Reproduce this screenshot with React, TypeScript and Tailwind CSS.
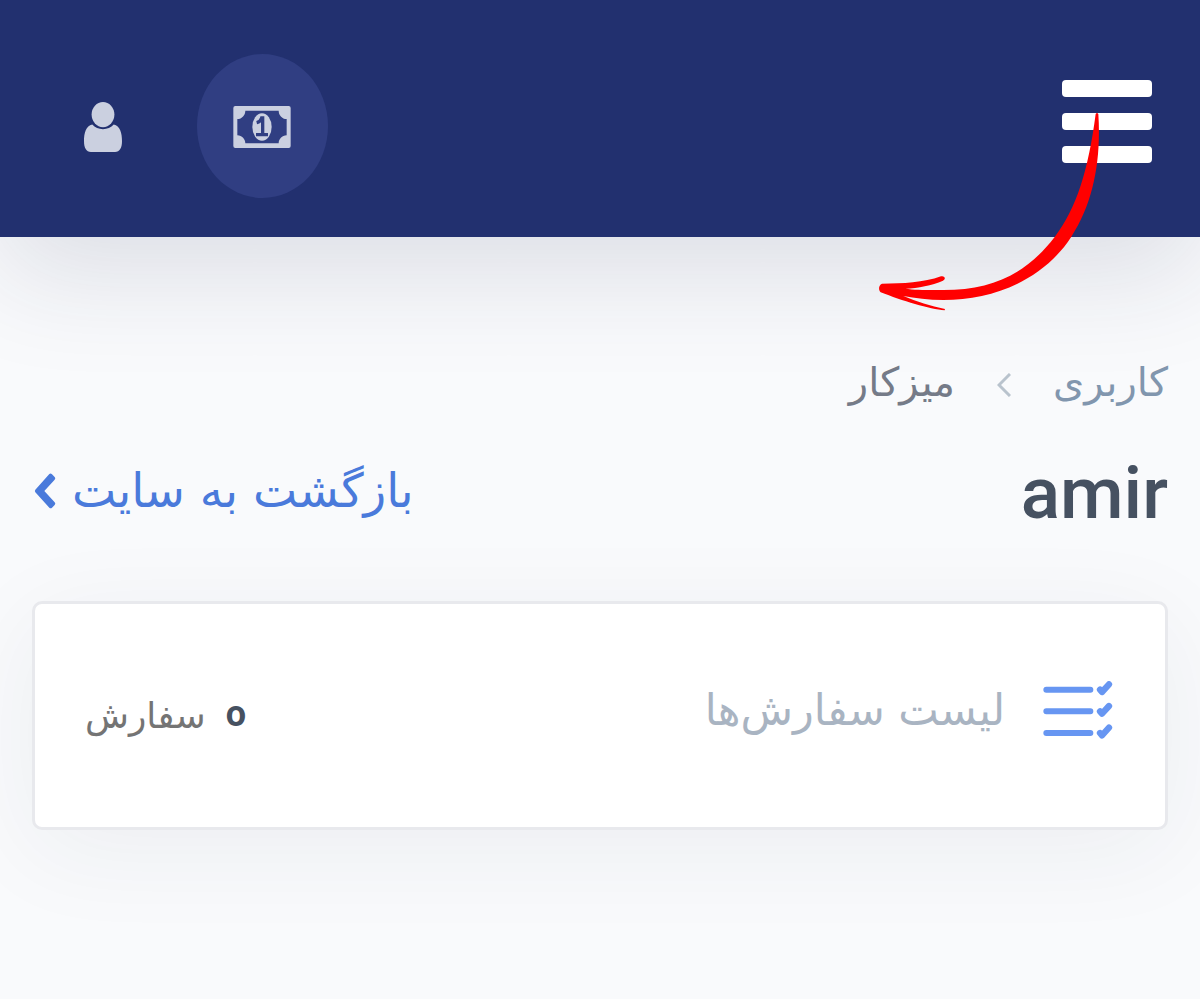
function UserIcon() {
  return (
    <svg viewBox="72 185 115 151" className="h-[50px] w-[38px]" fill="currentColor" aria-hidden="true">
      <ellipse cx="129.500" cy="223" rx="34.500" ry="38" />
      <path d="M97 253C78 256 72 280 72 303C72 324 79 336 93 336H166C180 336 187 324 187 303C187 280 181 256 162 253C154 262 142 267 129.500 267S105 262 97 253Z" />
    </svg>
  );
}

function BanknoteIcon() {
  return (
    <svg viewBox="520 197 172 126" className="h-[42px] w-[58px]" aria-hidden="true">
      <path
        fill="currentColor"
        fillRule="evenodd"
        d="M526 197H686Q692 197 692 203V317Q692 323 686 323H526Q520 323 520 317V203Q520 197 526 197ZM556 211C556 224 546 236 532 236V285C546 285 556 297 556 309H656C656 297 666 285 680 285V236C666 236 656 224 656 211Z"
      />
      <ellipse cx="606" cy="260" rx="29" ry="41" fill="currentColor" />
      <path d="M590 247C598 245 603 240 605 233H608V284M588 283H624" fill="none" stroke="#303e82" strokeWidth="10" />
    </svg>
  );
}

function ChecklistIcon() {
  return (
    <svg viewBox="0 0 210 174" className="h-[58px] w-[70px]" fill="none" stroke="currentColor" strokeLinecap="round" strokeLinejoin="round" aria-hidden="true">
      <path strokeWidth="18" d="M10 26H142M10 91H142M10 156H142" />
      <path strokeWidth="19" d="M171 26L177 33L198 10M171 91L177 98L198 75M171 156L177 163L198 140" />
    </svg>
  );
}

function HandDrawnArrow() {
  return (
    <svg
      viewBox="0 0 960 810"
      className="pointer-events-none absolute -right-7 -top-5 h-[270px] w-80 max-w-none"
      fill="#ff0000"
      aria-hidden="true"
    >
      <path d="M707 162Q711 156 715 162C724 300 700 430 634 530C550 660 400 720 250 720C205 720 165 715 130 708C170 725 212 738 255 747L254 751C210 748 125 722 62 697C55 691 55 675 66 671C130 671 190 668 243 649C254 646 259 657 249 662C215 676 175 684 136 686C165 690 210 691 250 690C400 690 500 640 584 531C650 445 685 330 707 162Z" />
    </svg>
  );
}

export default function App() {
  return (
    <div dir="rtl" className="min-h-screen bg-[#f9fafc] font-['DejaVu_Sans',sans-serif]">
      <header className="relative flex h-[237px] items-start justify-between bg-[#22306f] pl-[84px] pr-12 shadow-[0_36px_110px_rgba(34,42,80,0.13)]">
        <div className="relative z-10 mt-20">
          <button type="button" aria-label="منو" className="flex w-[90px] flex-col gap-4">
            <span className="h-[17px] w-full rounded bg-white" />
            <span className="h-[17px] w-full rounded bg-white" />
            <span className="h-[17px] w-full rounded bg-white" />
          </button>
          <HandDrawnArrow />
        </div>
        <div className="mt-[54px] flex items-center gap-[75px] text-[#cbd0e0]">
          <button type="button" aria-label="کیف پول" className="flex h-36 w-[131px] items-center justify-center rounded-[50%] bg-[#303e82] pr-0.5 pt-0.5">
            <BanknoteIcon />
          </button>
          <button type="button" aria-label="حساب کاربری" className="pt-0.5">
            <UserIcon />
          </button>
        </div>
      </header>

      <main className="px-8 pt-[112px]">
        <nav className="flex h-[72px] items-center text-[40px] leading-[72px]">
          <a href="#account" className="pb-1.5 text-[#8196ae]">کاربری</a>
          <svg viewBox="0 0 14 24" className="mx-[42px] h-6 w-3.5" fill="none" stroke="#b9c3cd" strokeWidth="3" aria-hidden="true">
            <path d="M13 1L2 12L13 23" />
          </svg>
          <a href="#dashboard" className="pb-1.5 text-[#757b88]">میزکار</a>
        </nav>

        <div className="flex h-[140px] items-center justify-between">
          <h1 className="pt-1 font-[Roboto,sans-serif] text-[73px] font-medium leading-[80px] text-[#465161]">amir</h1>
          <a href="#site" className="flex items-center gap-4 pl-0.5 text-[47px] leading-[72px] text-[#4a7adb]">
            بازگشت به سایت
            <svg viewBox="0 0 64 108" className="h-9 w-[22px]" fill="currentColor" aria-hidden="true">
              <path d="M45 3Q49 0 53 4L61 12Q65 16 61 20L30 54L61 88Q65 92 61 96L53 104Q49 108 45 104L3 58Q0 54 3 50Z" />
            </svg>
          </a>
        </div>

        <section className="mt-10 flex h-[229px] items-center justify-between rounded-[10px] border-[3px] border-[#e8e9ed] bg-white pl-[50px] pr-[52px] shadow-[0_20px_100px_rgba(40,44,64,0.06)]">
          <div className="flex items-center gap-[38px] pb-3">
            <span className="text-[#6796f2]"><ChecklistIcon /></span>
            <h2 className="text-[43px] leading-[72px] text-[#a9b4c2]">لیست سفارش‌ها</h2>
          </div>
          <p className="flex items-center gap-5 text-4xl leading-[72px] text-[#747474]">
            <strong className="pb-1 font-[Roboto,sans-serif] font-bold leading-[72px] text-[#465161]">o</strong>
            <span className="leading-[72px]">سفارش</span>
          </p>
        </section>
      </main>
    </div>
  );
}
